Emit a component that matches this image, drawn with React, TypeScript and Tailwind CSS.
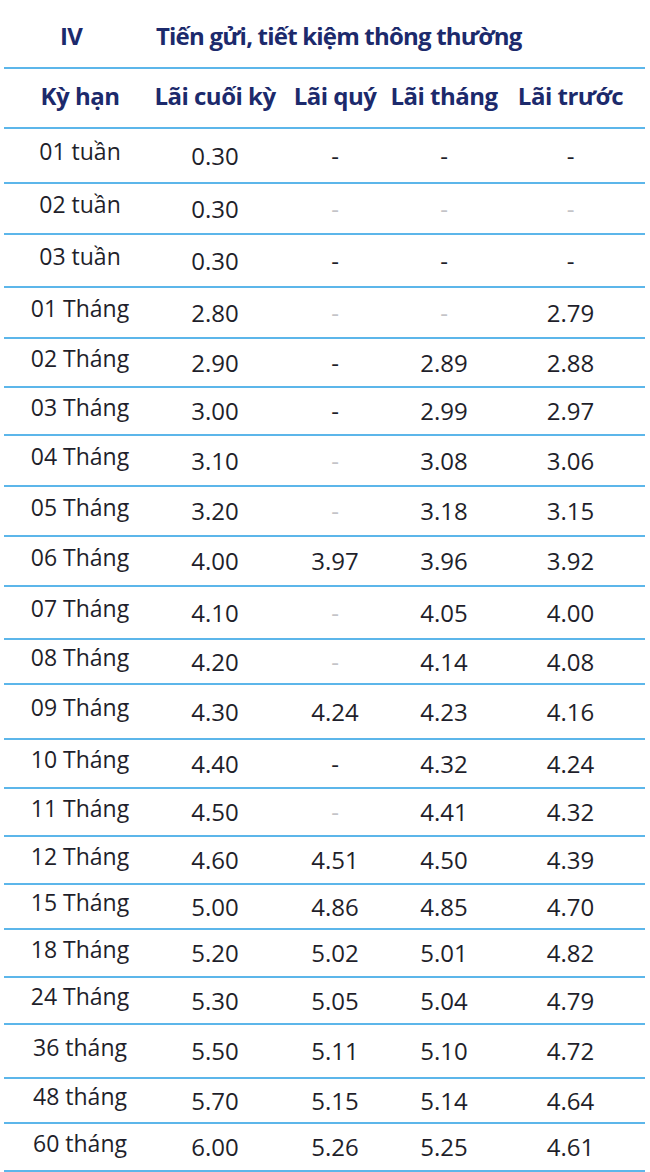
type Cell = string | { v: string; light?: boolean };

const D = "-";
const L = { v: "-", light: true };

const rows: { label: string; h: string; cells: Cell[] }[] = [
  { label: "01 tuần", h: "h-[55px]", cells: ["0.30", D, D, D] },
  { label: "02 tuần", h: "h-[51px]", cells: ["0.30", L, L, L] },
  { label: "03 tuần", h: "h-[53px]", cells: ["0.30", D, D, D] },
  { label: "01 Tháng", h: "h-[51px]", cells: ["2.80", L, L, "2.79"] },
  { label: "02 Tháng", h: "h-[49px]", cells: ["2.90", D, "2.89", "2.88"] },
  { label: "03 Tháng", h: "h-[48px]", cells: ["3.00", D, "2.99", "2.97"] },
  { label: "04 Tháng", h: "h-[51px]", cells: ["3.10", L, "3.08", "3.06"] },
  { label: "05 Tháng", h: "h-[50px]", cells: ["3.20", L, "3.18", "3.15"] },
  { label: "06 Tháng", h: "h-[50px]", cells: ["4.00", "3.97", "3.96", "3.92"] },
  { label: "07 Tháng", h: "h-[53px]", cells: ["4.10", L, "4.05", "4.00"] },
  { label: "08 Tháng", h: "h-[45px]", cells: ["4.20", L, "4.14", "4.08"] },
  { label: "09 Tháng", h: "h-[55px]", cells: ["4.30", "4.24", "4.23", "4.16"] },
  { label: "10 Tháng", h: "h-[49px]", cells: ["4.40", D, "4.32", "4.24"] },
  { label: "11 Tháng", h: "h-[48px]", cells: ["4.50", L, "4.41", "4.32"] },
  { label: "12 Tháng", h: "h-[48px]", cells: ["4.60", "4.51", "4.50", "4.39"] },
  { label: "15 Tháng", h: "h-[45px]", cells: ["5.00", "4.86", "4.85", "4.70"] },
  { label: "18 Tháng", h: "h-[48px]", cells: ["5.20", "5.02", "5.01", "4.82"] },
  { label: "24 Tháng", h: "h-[47px]", cells: ["5.30", "5.05", "5.04", "4.79"] },
  { label: "36 tháng", h: "h-[54px]", cells: ["5.50", "5.11", "5.10", "4.72"] },
  { label: "48 tháng", h: "h-[45px]", cells: ["5.70", "5.15", "5.14", "4.64"] },
  { label: "60 tháng", h: "h-[48px]", cells: ["6.00", "5.26", "5.25", "4.61"] },
];

const grid = "grid grid-cols-[152px_118px_122px_96px_153px] border-b-2 border-[#5cb6ea] box-border";

function CellView({ c, last }: { c: Cell; last: boolean }) {
  const v = typeof c === "string" ? c : c.v;
  const light = typeof c !== "string" && c.light;
  return (
    <div
      className={`flex items-center justify-center ${last ? "pl-[4px]" : ""} ${
        light ? "text-[#c4c4c8]" : "text-[#1f1f2b]"
      }`}
    >
      {v}
    </div>
  );
}

export default function App() {
  return (
    <div className="min-h-[1172px] bg-white font-['Open_Sans',sans-serif]">
      <div className="ml-[4px] w-[641px]">
        <div className={`${grid} h-[69px] text-[24px] font-bold text-[#1c2a6c] whitespace-nowrap tracking-[-0.8px]`}>
          <div className="flex items-center justify-center pr-[18px] pt-[4px]">IV</div>
          <div className="col-span-4 flex items-center pt-[4px]">Tiến gửi, tiết kiệm thông thường</div>
        </div>
        <div className={`${grid} h-[60px] text-[24px] font-bold text-[#1c2a6c] whitespace-nowrap tracking-[-0.5px]`}>
          <div className="flex items-center justify-center pb-[4px]">Kỳ hạn</div>
          <div className="flex items-center justify-center pb-[4px]">Lãi cuối kỳ</div>
          <div className="flex items-center justify-center pb-[4px]">Lãi quý</div>
          <div className="flex items-center justify-center pb-[4px]">Lãi tháng</div>
          <div className="flex items-center justify-center pb-[4px] pl-[4px]">Lãi trước</div>
        </div>
        {rows.map((r) => (
          <div key={r.label} className={`${grid} ${r.h} text-[24px] whitespace-nowrap`}>
            <div className="flex items-center justify-center pb-[8px] text-[23px] text-[#1f1f2b]">{r.label}</div>
            {r.cells.map((c, i) => (
              <CellView key={i} c={c} last={i === 3} />
            ))}
          </div>
        ))}
      </div>
    </div>
  );
}
